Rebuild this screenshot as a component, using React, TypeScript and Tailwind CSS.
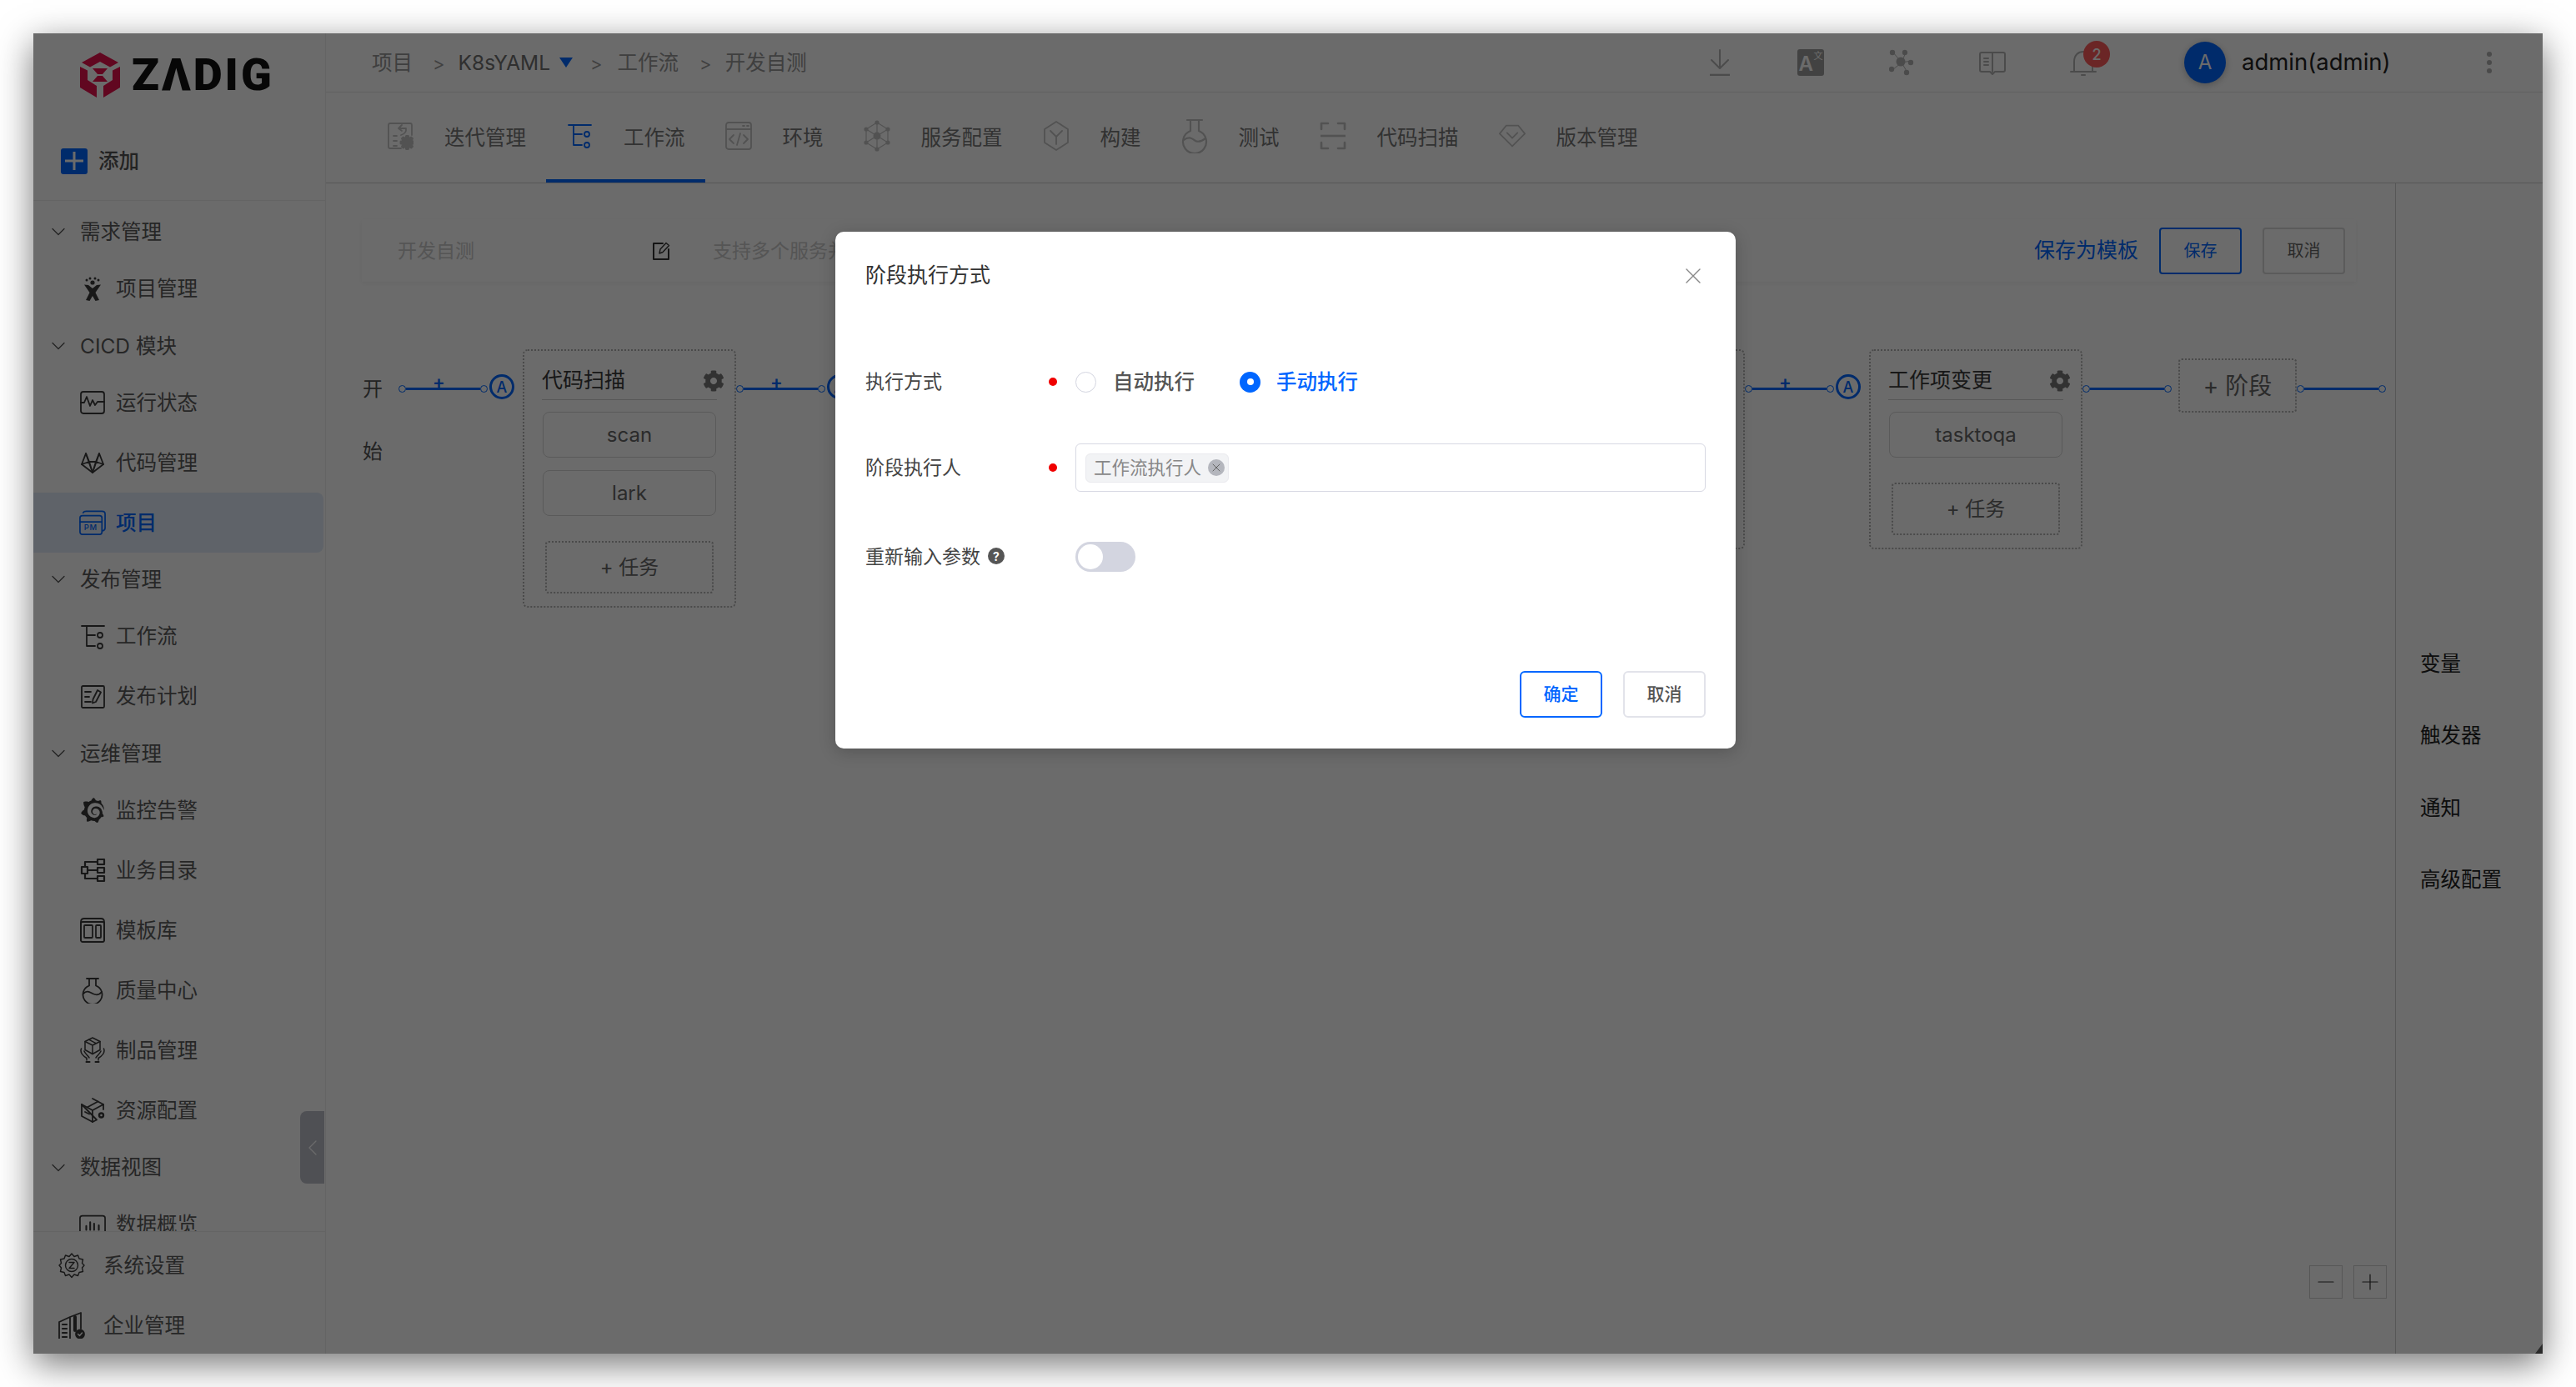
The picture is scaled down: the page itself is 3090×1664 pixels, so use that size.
import { ReactNode } from 'react';
import { FaCog } from 'react-icons/fa';
import { SiGrafana } from 'react-icons/si';

const FONT = "font-['Inter','Noto_Sans_CJK_SC',sans-serif]";

function gearPath(cx: number, cy: number, outer: number, inner: number, teeth: number) {
  const pts: string[] = [];
  const step = (Math.PI * 2) / teeth;
  for (let i = 0; i < teeth; i++) {
    const a = i * step;
    const list: [number, number][] = [
      [inner, a - step * 0.5],
      [inner, a - step * 0.28],
      [outer, a - step * 0.16],
      [outer, a + step * 0.16],
      [inner, a + step * 0.28],
    ];
    list.forEach(([r, t]) => pts.push(`${(cx + r * Math.cos(t)).toFixed(2)} ${(cy + r * Math.sin(t)).toFixed(2)}`));
  }
  return `M${pts.join('L')}Z`;
}

function Svg({ children, w = 32, h = 32, vb, sw = 2, className = '' }: { children: ReactNode; w?: number; h?: number; vb?: string; sw?: number; className?: string }) {
  return (
    <svg width={w} height={h} viewBox={vb ?? `0 0 ${w} ${h}`} fill="none" stroke="currentColor" strokeWidth={sw} strokeLinecap="round" strokeLinejoin="round" className={className}>
      {children}
    </svg>
  );
}

function Chevron() {
  return (
    <Svg w={16} h={10} sw={1.3}>
      <path d="M1 1.5L8 8.5L15 1.5" />
    </Svg>
  );
}

// sidebar icons
const JiraIcon = () => (
  <Svg>
    <g fill="currentColor" stroke="none">
      <circle cx="16" cy="8" r="2.6" />
      <circle cx="9" cy="5" r="1.5" />
      <circle cx="13" cy="3" r="1.5" />
      <circle cx="19" cy="3" r="1.5" />
      <circle cx="23" cy="5" r="1.5" />
      <path d="M6 10.5L11 11L16 15L21 11L26 10.5L19.5 20L24 29L19.5 30L16 24L12.5 30L8 29L12.5 20Z" />
    </g>
  </Svg>
);
const PulseIcon = () => (
  <Svg sw={1.8}>
    <rect x="2" y="3" width="28" height="26" rx="3" />
    <path d="M2 16H6L9 9L13 20L16 13L19 19L22 15H30" />
  </Svg>
);
const GitlabIcon = () => (
  <Svg sw={1.8}>
    <path d="M16 28L3 18L8 5L12 15H20L24 5L29 18Z" />
    <path d="M16 28L12 15M16 28L20 15M3 18L12 15M29 18L20 15M16 28L8 5M16 28L24 5" />
  </Svg>
);
const PmIcon = () => (
  <Svg w={34} h={32} sw={1.8}>
    <rect x="1" y="7" width="28" height="24" rx="3" />
    <path d="M1 15H29" />
    <path d="M5 3.5Q6 1.5 9 1.5H29Q33 1.5 33 5V23Q33 26 29.5 26.5" />
    <text x="6" y="26" fontSize="10" fill="currentColor" stroke="none" fontFamily="Inter" letterSpacing="1">PM</text>
  </Svg>
);
const FlowIcon = ({ w = 32 }: { w?: number }) => (
  <Svg w={w} h={w} vb="0 0 32 32" sw={1.8}>
    <path d="M3 3H30M9 3V27H19M9 14H19" />
    <circle cx="25" cy="14" r="3" />
    <circle cx="25" cy="27" r="3" />
  </Svg>
);
const PlanIcon = () => (
  <Svg sw={1.8}>
    <rect x="3" y="3" width="27" height="26" rx="1.5" />
    <path d="M7 10H14M7 16H12M7 22H14" />
    <path d="M22 8L26 10.5L20 22L16 23.5L16.5 19Z" />
  </Svg>
);
const CatalogIcon = () => (
  <Svg sw={2.2}>
    <rect x="3" y="12" width="7" height="8" />
    <rect x="22" y="3" width="8" height="6" />
    <rect x="22" y="13" width="8" height="6" />
    <rect x="22" y="23" width="8" height="6" />
    <path d="M7 12V6H22M10 16H22M7 20V26H22" />
  </Svg>
);
const TemplateIcon = () => (
  <Svg sw={1.8}>
    <path d="M2 28V6Q2 2 6 2H26Q30 2 30 6V28" />
    <rect x="2" y="6" width="28" height="24" rx="2" />
    <rect x="6" y="10" width="10" height="15" rx="1" />
    <rect x="20" y="10" width="6" height="15" rx="1" />
  </Svg>
);
const FlaskIcon = () => (
  <Svg sw={1.8}>
    <path d="M9 2H23M12 2V10.5A11.5 11.5 0 1 0 20 10.5V2" />
    <path d="M5 20C9 16 12 18 16 20C20 22 24 22 27 18" />
  </Svg>
);
const BoxHandsIcon = () => (
  <Svg sw={1.5}>
    <path d="M16 1L25 5.5V15.5L16 20.5L7 15.5V5.5Z" />
    <path d="M7 5.5L16 10L25 5.5M16 10V20.5M11.5 3.2L20.5 7.8" />
    <path d="M2.5 14C0.5 19 5 23 9 25.5V28M29.5 14C31.5 19 27 23 23 25.5V28M6 17C7 20 10 22 12 25M26 17C25 20 22 22 20 25" />
    <path d="M8.5 30H12.5M19.5 30H23.5" strokeWidth="2" />
  </Svg>
);
const ResourceIcon = () => (
  <Svg sw={1.8}>
    <path d="M16 2L29 9V15M21 27.5L16 30L3 23V9Z" />
    <path d="M3 9L16 16L29 9M16 16V30M9.5 12.5L22.5 5.5M7 18L12 20.5" />
    <circle cx="26.5" cy="22" r="2.5" strokeWidth="2.4" />
  </Svg>
);
const ChartIcon = () => (
  <Svg w={34} h={32} sw={1.8}>
    <rect x="1" y="5" width="32" height="24" rx="3" />
    <path d="M9 18V23M14 13V23M19 15V23M25 17V23" strokeWidth="2.2" />
  </Svg>
);
const SystemIcon = () => (
  <Svg sw={1.4}>
    <path d="M16 2L19 5.5L23.5 4L25 8L29.5 9L28.5 13.5L31 16L28.5 19L29.5 23.5L25 24.5L23.5 28.5L19 27L16 30.5L13 27L8.5 28.5L7 24.5L2.5 23.5L3.5 19L1 16L3.5 13.5L2.5 9L7 8L8.5 4L13 5.5Z" />
    <circle cx="16" cy="16" r="7.5" />
    <path d="M13 12.5H19L13 19.5H19" />
  </Svg>
);
const CompanyIcon = () => (
  <Svg sw={1.8}>
    <path d="M1 32V12L14 6V32M14 6L27 1V20" />
    <path d="M5 15H10M5 20H10M5 25H10M5 30H10" strokeWidth="2.2" />
    <path d="M20 6V22" strokeWidth="4" />
    <circle cx="26" cy="26.5" r="5" fill="currentColor" />
    <path d="M23.5 26.5L25.5 28.5L28.5 25" stroke="#fff" strokeWidth="1.4" />
  </Svg>
);

type NavEntry = { label: string; icon?: ReactNode; active?: boolean };

const NAV: NavEntry[] = [
  { label: '需求管理' },
  { label: '项目管理', icon: <JiraIcon /> },
  { label: 'CICD 模块' },
  { label: '运行状态', icon: <PulseIcon /> },
  { label: '代码管理', icon: <GitlabIcon /> },
  { label: '项目', icon: <PmIcon />, active: true },
  { label: '发布管理' },
  { label: '工作流', icon: <FlowIcon /> },
  { label: '发布计划', icon: <PlanIcon /> },
  { label: '运维管理' },
  { label: '监控告警', icon: <SiGrafana size={30} /> },
  { label: '业务目录', icon: <CatalogIcon /> },
  { label: '模板库', icon: <TemplateIcon /> },
  { label: '质量中心', icon: <FlaskIcon /> },
  { label: '制品管理', icon: <BoxHandsIcon /> },
  { label: '资源配置', icon: <ResourceIcon /> },
  { label: '数据视图' },
  { label: '数据概览', icon: <ChartIcon /> },
];

function NavRow({ entry }: { entry: NavEntry }) {
  if (!entry.icon) {
    return (
      <div className="flex h-[64.6px] items-center gap-[18px] pl-[22px] text-[24.5px] text-[#5c5c5c] [&_svg]:text-[#555]">
        <Chevron />
        <span>{entry.label}</span>
      </div>
    );
  }
  return (
    <div className={`flex h-[72px] w-[348px] items-center gap-[12px] rounded-r-lg pl-[55px] text-[24.5px] ${entry.active ? 'bg-[#e2ecfa] font-medium text-[#0066ff]' : 'text-[#5c5c5c]'}`}>
      <span className={`flex w-[32px] shrink-0 justify-center ${entry.active ? '' : 'text-[#3a3a3a]'}`}>{entry.icon}</span>
      <span>{entry.label}</span>
    </div>
  );
}

function Sidebar() {
  return (
    <aside className="relative flex h-full w-[351px] shrink-0 flex-col border-r border-[#eeeeee]">
      {/* Logo and add button */}
      <div className="h-[201px] shrink-0 border-b border-[#eeeeee]">
        <div className="ml-[56px] mt-[23px] flex h-[54px] items-center gap-[14px]">
          <svg width="48" height="54" viewBox="0 0 48 54">
            <g fill="#e8124e">
              <path d="M24 0L46 12L36 17.5L24 11L12 17.5L2 12Z" />
              <path d="M0 17L9 21.5V33L20 40V54L0 42Z" />
              <path d="M48 17L39 21.5V33L28 40V54L48 42Z" />
              <path d="M15 19H33L27 26H21Z" />
              <path d="M21 28H27L33 35H15Z" />
            </g>
          </svg>
          <span className="font-['Roboto',sans-serif] text-[54px] font-black leading-none tracking-[3px] text-[#111]">ZΛDIG</span>
        </div>
        <div className="ml-[33px] mt-[58px] flex items-center gap-[13px]">
          <span className="flex h-[31px] w-[32px] items-center justify-center rounded-[3px] bg-[#0066ff] text-white">
            <Svg w={24} h={24} sw={3}>
              <path d="M12 1V23M1 12H23" strokeLinecap="butt" />
            </Svg>
          </span>
          <span className="text-[24.5px] font-medium text-[#555]">添加</span>
        </div>
      </div>

      {/* Nav list */}
      <div className="min-h-0 flex-1 overflow-hidden pt-[5px]">
        {NAV.map((entry) => (
          <NavRow key={entry.label} entry={entry} />
        ))}
      </div>

      {/* Bottom entries */}
      <div className="h-[147px] shrink-0 overflow-hidden border-t border-[#eeeeee] pt-[4px] text-[24.5px] text-[#5c5c5c]">
        <div className="flex h-[72px] items-center gap-[22px] pl-[30px]">
          <span className="text-[#3a3a3a]"><SystemIcon /></span>
          <span>系统设置</span>
        </div>
        <div className="flex h-[72px] items-center gap-[22px] pl-[30px]">
          <span className="text-[#3a3a3a]"><CompanyIcon /></span>
          <span>企业管理</span>
        </div>
      </div>

      {/* Collapse handle */}
      <div className="absolute right-[1px] top-[1293px] flex h-[87px] w-[29px] items-center justify-center rounded-l-lg bg-[#bcbec8] text-white">
        <Svg w={12} h={18} sw={1.3}>
          <path d="M10 1L2 9L10 17" />
        </Svg>
      </div>
    </aside>
  );
}

function Breadcrumb() {
  const sep = <span className="text-[22px] text-[#999]">&gt;</span>;
  return (
    <div className="flex items-center text-[24.5px] text-[#969696]">
      <span>项目</span>
      <span className="ml-[24px]">{sep}</span>
      <span className="ml-[16px] text-[#707070]">K8sYAML</span>
      <svg width="16" height="12" viewBox="0 0 16 12" className="ml-[11px]"><path d="M0 0H16L8 12Z" fill="#0066ff" /></svg>
      <span className="ml-[21px]">{sep}</span>
      <span className="ml-[18px]">工作流</span>
      <span className="ml-[25px]">{sep}</span>
      <span className="ml-[16px]">开发自测</span>
    </div>
  );
}

function HeaderIcons() {
  return (
    <div className="flex items-center text-[#b4b4b4]">
      <span className="flex w-[109px] justify-center">
        <Svg w={28} h={32} sw={2}>
          <path d="M14 1V22M4 13L14 23L24 13" />
          <path d="M2 31H26" strokeWidth="2.6" strokeLinecap="butt" />
        </Svg>
      </span>
      <span className="flex w-[109px] justify-center">
        <span className="relative flex h-[32px] w-[32px] rounded-[3px] bg-[#9e9e9e] font-semibold text-white">
          <span className="absolute bottom-0 left-[2px] text-[24px] leading-[28px]">A</span>
          <span className="absolute right-[1px] top-[1px] text-[11px] font-normal leading-[14px]">文</span>
        </span>
      </span>
      <span className="flex w-[109px] justify-center">
        <Svg w={30} h={32} sw={1}>
          <path d="M15 16L5 4M15 16L20 4M15 16L27 14M15 16L22 28M15 16L4 25" />
          <g fill="currentColor" stroke="none">
            <circle cx="14" cy="15" r="5.5" />
            <circle cx="4" cy="4" r="3.2" />
            <circle cx="19" cy="4" r="3.2" />
            <circle cx="26" cy="16" r="3.2" />
            <circle cx="21" cy="28" r="3.2" />
            <circle cx="3" cy="24" r="3.2" />
          </g>
        </Svg>
      </span>
      <span className="flex w-[109px] justify-center">
        <Svg w={32} h={32} sw={2}>
          <path d="M16 4V27M16 4H3Q1 4 1 6V25Q1 27 3 27H13L16 30L19 27H29Q31 27 31 25V6Q31 4 29 4H16" />
          <path d="M6 11H11M6 15H11M6 19H11" />
        </Svg>
      </span>
      <span className="relative flex w-[109px] justify-center">
        <Svg w={32} h={34} sw={2}>
          <path d="M1 28H31M5 28V16C5 8 10 4 16 4C22 4 27 8 27 16V28" />
          <path d="M14 32H18" />
        </Svg>
        <span className="absolute left-[55px] top-[-9px] flex h-[32px] w-[32px] items-center justify-center rounded-full bg-[#ff5c5c] text-[18px] font-medium text-white">2</span>
      </span>
    </div>
  );
}

function Header() {
  return (
    <header className="flex h-[71px] shrink-0 items-center border-b border-[#e8e8e8] pl-[55px] pr-[60px]">
      <Breadcrumb />
      <div className="ml-auto flex items-center">
        <HeaderIcons />
        <span className="ml-[67px] flex h-[50px] w-[50px] items-center justify-center rounded-full bg-[#0066ff] text-[24px] text-white shadow-[0_2px_8px_rgba(0,0,0,0.25)]">A</span>
        <span className="ml-[19px] w-[293px] text-[27.5px] text-[#222]">admin(admin)</span>
        <span className="flex w-[8px] flex-col items-center gap-[4px]">
          <i className="h-[6px] w-[6px] rounded-full bg-[#b0b0b0]" />
          <i className="h-[6px] w-[6px] rounded-full bg-[#b0b0b0]" />
          <i className="h-[6px] w-[6px] rounded-full bg-[#b0b0b0]" />
        </span>
      </div>
    </header>
  );
}

const TABS: { label: string; icon: ReactNode; active?: boolean }[] = [
  {
    label: '迭代管理',
    icon: (
      <Svg w={32} h={34} sw={1.8}>
        <path d="M17 32H4Q2 32 2 30V4Q2 2 4 2H28Q30 2 30 4V16" />
        <path d="M8 17H12M8 23H12M8 29H12M14 8H23Q24 14 17 16M14 8L18 4M14 8L18 11" />
        <path d={gearPath(24.5, 25, 7.5, 5.5, 8)} strokeWidth="3" fill="currentColor" />
      </Svg>
    ),
  },
  { label: '工作流', icon: <FlowIcon />, active: true },
  {
    label: '环境',
    icon: (
      <Svg w={32} h={34} sw={1.8}>
        <rect x="1" y="1" width="30" height="32" rx="3" />
        <path d="M1 9H31M21 5H23M26 5H28M10 16L5 21L10 26M22 16L27 21L22 26M18 14L14 28" />
      </Svg>
    ),
  },
  {
    label: '服务配置',
    icon: (
      <Svg w={32} h={38} sw={1.2}>
        <path d="M16 3L29 11V27L16 35L3 27V11ZM16 3V35M16 19L3 11M16 19L29 11M16 19L3 27M16 19L29 27" />
        <g fill="currentColor" stroke="none">
          <circle cx="16" cy="3" r="2.6" />
          <circle cx="29" cy="11" r="2.6" />
          <circle cx="29" cy="27" r="2.6" />
          <circle cx="16" cy="35" r="2.6" />
          <circle cx="3" cy="27" r="2.6" />
          <circle cx="3" cy="11" r="2.6" />
          <circle cx="16" cy="19" r="4.5" />
        </g>
      </Svg>
    ),
  },
  {
    label: '构建',
    icon: (
      <Svg w={32} h={36} sw={1.8}>
        <path d="M16 1L30 10V26L16 35L2 26V10Z" />
        <path d="M9 12L16 19L23 12M16 19V28" />
      </Svg>
    ),
  },
  {
    label: '测试',
    icon: (
      <Svg w={32} h={42} sw={2.2}>
        <path d="M7 2H25M11 2V15A14 14 0 1 0 21 15V2" />
        <path d="M3 26C9 21 13 24 17 27C21 29 25 27 29 24" />
      </Svg>
    ),
  },
  {
    label: '代码扫描',
    icon: (
      <Svg w={32} h={36} sw={2.6}>
        <path d="M2 10V3H10M22 3H30V10M2 26V33H10M22 33H30V26" />
        <path d="M1 18H31" strokeLinecap="butt" />
      </Svg>
    ),
  },
  {
    label: '版本管理',
    icon: (
      <Svg w={36} h={32} sw={2}>
        <path d="M10 2H26L35 13L18 30L1 13Z" />
        <path d="M11 12L18 19L25 12" />
      </Svg>
    ),
  },
];

function Tabs() {
  return (
    <nav className="flex h-[109px] shrink-0 border-b border-[#cfcfcf] pl-[49px]">
      {TABS.map((tab) => (
        <div key={tab.label} className={`flex h-[108px] items-center border-b-[4px] px-[24px] ${tab.active ? 'border-[#0066ff]' : 'border-transparent'}`}>
          <span className={`flex h-[42px] w-[32px] shrink-0 items-center justify-center ${tab.active ? 'text-[#0066ff]' : 'text-[#c4c4c4]'}`}>{tab.icon}</span>
          <span className="ml-[37px] translate-y-[2px] text-[24.5px] text-[#777]">{tab.label}</span>
        </div>
      ))}
    </nav>
  );
}

function Connector({ plus = true }: { plus?: boolean }) {
  return (
    <div className="relative mt-[38px] flex h-[18px] w-[107px] shrink-0 items-center">
      <i className="h-[9px] w-[9px] shrink-0 rounded-full border-[1.5px] border-[#0066ff]" />
      <i className="h-[3px] flex-1 bg-[#0066ff]" />
      <i className="h-[9px] w-[9px] shrink-0 rounded-full border-[1.5px] border-[#0066ff]" />
      {plus && <span className="absolute left-[41px] top-[-11px] text-[22px] font-semibold leading-[24px] text-[#0066ff]">+</span>}
    </div>
  );
}

function AutoBadge() {
  return (
    <span className="ml-[2px] mt-[30px] flex h-[30px] w-[30px] shrink-0 items-center justify-center rounded-full border-[3px] border-[#0066ff] text-[18px] font-medium text-[#0066ff]">A</span>
  );
}

function Stage({ title, tasks }: { title: string; tasks: string[] }) {
  return (
    <div className="ml-[10px] w-[256px] shrink-0 self-start rounded-md border-2 border-dotted border-[#b0b0b0] px-[21px] pb-[15px]">
      <div className="mt-[13px] flex h-[46px] items-center justify-between border-b border-[#d0d0d0]">
        <span className="text-[25px] text-[#3a3a3a]">{title}</span>
        <FaCog size={26} className="mr-[-9px] text-[#787878]" />
      </div>
      <div className="mt-[14px] flex flex-col gap-[15px]">
        {tasks.map((task) => (
          <div key={task} className="mx-[1px] flex h-[55px] items-center justify-center rounded-lg border border-[#d6d6d6] text-[24px] text-[#666]">
            {task}
          </div>
        ))}
      </div>
      <div className="mx-[4px] mt-[30px] flex h-[63px] items-center justify-center rounded border-2 border-dotted border-[#b0b0b0] text-[24px] text-[#666]">+ 任务</div>
    </div>
  );
}

function Canvas() {
  return (
    <div className="relative min-w-0 flex-1 overflow-hidden pl-[43px] pr-[47px] pt-[43px]">
      {/* Toolbar */}
      <div className="flex h-[75px] items-center bg-white pl-[43px] pr-[13px] shadow-[0_2px_6px_rgba(0,0,0,0.05)]">
        <span className="w-[305px] translate-y-[1px] text-[23px] text-[#cacaca]">开发自测</span>
        <Svg w={22} h={22} sw={2} className="text-[#333]">
          <path d="M13 2H2V21H20V9" />
          <path d="M9 14L10 9L17 1.5L20.5 4.5L13 12.5Z" strokeWidth="1.4" />
        </Svg>
        <span className="ml-[51px] translate-y-[1px] text-[23px] text-[#cacaca]">支持多个服务并行构建</span>
        <span className="ml-auto text-[25px] text-[#0066ff]">保存为模板</span>
        <span className="ml-[25px] flex h-[56px] w-[99px] items-center justify-center rounded border-2 border-[#0066ff] text-[20px] text-[#0066ff]">保存</span>
        <span className="ml-[25px] flex h-[56px] w-[99px] items-center justify-center rounded border-2 border-[#d8d8d8] text-[20px] text-[#666]">取消</span>
      </div>

      {/* Stage flow */}
      <div className="mt-[81px] flex items-start">
        <span className="ml-[1px] mt-[10px] w-[26px] text-[24px] leading-[75px] text-[#555]">开始</span>
        <div className="ml-[19px] flex">
          <Connector />
          <AutoBadge />
        </div>
        <Stage title="代码扫描" tasks={['scan', 'lark']} />
        <div className="flex">
          <Connector />
          <AutoBadge />
        </div>
        {/* middle stage, its right edge shows beside the dialog */}
        <div className="ml-[10px] h-[240px] w-[1061px] shrink-0 rounded-md border-2 border-dotted border-[#b0b0b0]" />
        <div className="flex">
          <Connector />
          <AutoBadge />
        </div>
        <Stage title="工作项变更" tasks={['tasktoqa']} />
        <Connector plus={false} />
        <div className="ml-[8px] mt-[11px] flex h-[65px] w-[142px] shrink-0 items-center justify-center rounded border-2 border-dotted border-[#b0b0b0] text-[28px] text-[#666]">+ 阶段</div>
        <Connector plus={false} />
      </div>

      {/* Zoom buttons */}
      <div className="absolute bottom-[66px] right-[10px] flex gap-[13px] text-[#333]">
        <span className="flex h-[40px] w-[40px] items-center justify-center border border-[#cfcfcf]">
          <Svg w={20} h={20} sw={1.2}><path d="M1 10H19" /></Svg>
        </span>
        <span className="flex h-[40px] w-[40px] items-center justify-center border border-[#cfcfcf]">
          <Svg w={20} h={20} sw={1.2}><path d="M1 10H19M10 1V19" /></Svg>
        </span>
      </div>
    </div>
  );
}

function SidePanel() {
  return (
    <div className="w-[177px] shrink-0 border-l border-[#cfcfcf] pl-[29px] pt-[533px] text-[24.5px] text-[#222]">
      {['变量', '触发器', '通知', '高级配置'].map((item) => (
        <div key={item} className="flex h-[86.5px] items-center">{item}</div>
      ))}
    </div>
  );
}

function Dialog() {
  const dot = <i className="h-[10px] w-[10px] shrink-0 rounded-full bg-[#f00000]" />;
  return (
    <div className="absolute left-[962px] top-[238px] flex h-[620px] w-[1080px] flex-col rounded-[10px] bg-white px-[36px] pb-[37px] shadow-[0_4px_20px_rgba(0,0,0,0.2)]">
      <div className="mt-[36px] flex h-[34px] items-center justify-between">
        <span className="text-[25px] text-[#333]">阶段执行方式</span>
        <Svg w={18} h={18} sw={1.4} className="mr-[6px] text-[#888]">
          <path d="M1 1L17 17M17 1L1 17" />
        </Svg>
      </div>

      <div className="mt-[81px] flex flex-col">
        {/* Mode */}
        <div className="flex h-[58px] items-center">
          <span className="w-[220px] text-[23px] text-[#444]">执行方式</span>
          {dot}
          <span className="ml-[22px] h-[25px] w-[25px] shrink-0 rounded-full border border-[#d3d5e0]" />
          <span className="ml-[20px] text-[24.5px] font-medium text-[#555]">自动执行</span>
          <span className="ml-[54px] flex h-[25px] w-[25px] shrink-0 items-center justify-center rounded-full bg-[#0066ff]">
            <i className="h-[8px] w-[8px] rounded-full bg-white" />
          </span>
          <span className="ml-[19px] text-[24.5px] font-medium text-[#0066ff]">手动执行</span>
        </div>

        {/* Assignee */}
        <div className="mt-[45px] flex h-[58px] items-center">
          <span className="w-[220px] text-[23px] text-[#444]">阶段执行人</span>
          {dot}
          <div className="ml-[22px] flex h-[58px] w-[756px] items-center rounded-md border border-[#d8d9e3] pl-[11px]">
            <span className="flex h-[35px] w-[172px] items-center rounded-md border border-[#eaeaee] bg-[#f2f3f5] pl-[9px] text-[21.5px] text-[#888]">
              工作流执行人
              <span className="ml-[8px] flex h-[20px] w-[20px] items-center justify-center rounded-full bg-[#b4b6bd] text-[#666]">
                <Svg w={10} h={10} sw={1}><path d="M1 1L9 9M9 1L1 9" /></Svg>
              </span>
            </span>
          </div>
        </div>

        {/* Re-enter params */}
        <div className="mt-[49px] flex h-[58px] items-center">
          <span className="w-[252px] text-[23px] text-[#444]">
            重新输入参数
            <span className="ml-[9px] inline-flex h-[20px] w-[20px] translate-y-[-2px] items-center justify-center rounded-full bg-[#555] align-middle text-[14px] font-bold text-white">?</span>
          </span>
          <span className="flex h-[36px] w-[72px] items-center rounded-full bg-[#d3d5e0] pl-[3px]">
            <i className="h-[30px] w-[30px] rounded-full bg-white" />
          </span>
        </div>
      </div>

      <div className="mt-auto flex justify-end gap-[25px] text-[21px]">
        <span className="flex h-[56px] w-[99px] items-center justify-center rounded-md border-2 border-[#0066ff] font-medium text-[#0066ff]">确定</span>
        <span className="flex h-[56px] w-[99px] items-center justify-center rounded-md border-2 border-[#e2e3ea] font-medium text-[#555]">取消</span>
      </div>
    </div>
  );
}

export default function App() {
  return (
    <div className={`h-[1664px] w-[3090px] overflow-hidden bg-white p-[40px] ${FONT}`}>
      {/* Window */}
      <div className="relative flex h-[1584px] w-[3010px] overflow-hidden bg-white shadow-[0_12px_40px_rgba(0,0,0,0.55)]">
        <Sidebar />
        <div className="flex min-w-0 flex-1 flex-col">
          <Header />
          <Tabs />
          <div className="flex min-h-0 flex-1">
            <Canvas />
            <SidePanel />
          </div>
        </div>

        {/* Dialog mask */}
        <div className="absolute inset-0 bg-black/[0.58]" />
        <Dialog />

        {/* Window corner */}
        <svg width="9" height="12" viewBox="0 0 9 12" className="absolute bottom-0 right-0">
          <path d="M9 0V12H0Z" fill="#2b2b2b" />
        </svg>
      </div>
    </div>
  );
}
